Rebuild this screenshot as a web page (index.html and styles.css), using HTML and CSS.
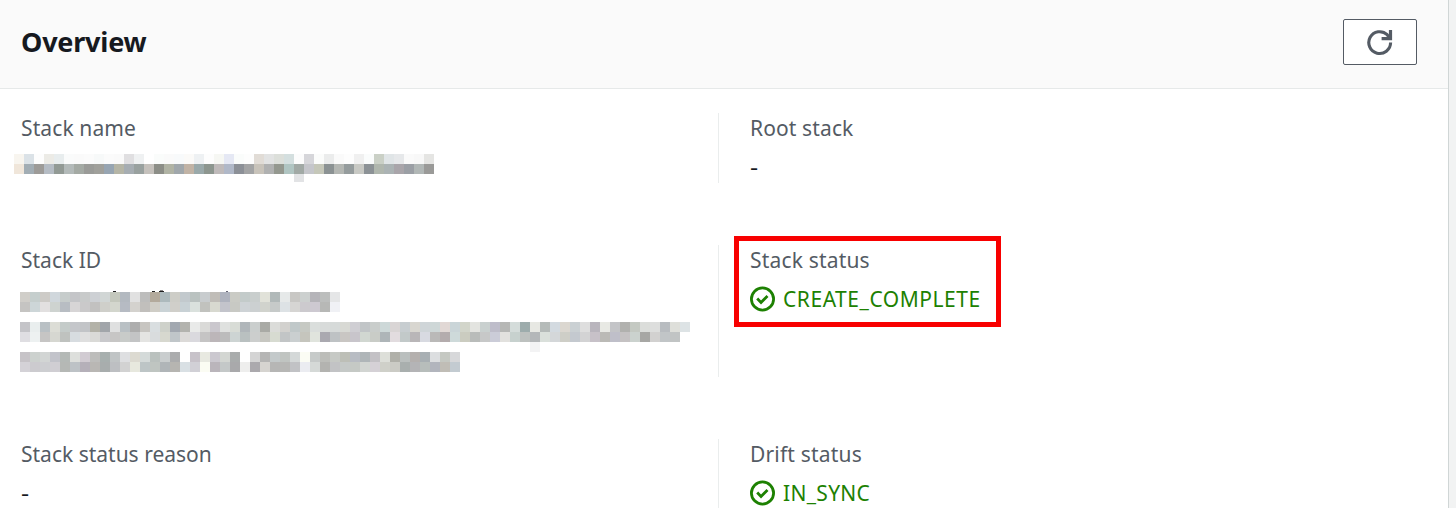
FILE: index.html
```html
<!DOCTYPE html>
<html lang="en">
<head>
<meta charset="utf-8">
<title>Overview</title>
<link rel="stylesheet" href="styles.css">
</head>
<body>
<main class="panel">
  <header class="panel-header">
    <h2 class="title">Overview</h2>
    <button class="refresh" aria-label="Refresh">
      <svg width="28" height="28" viewBox="0 0 28 28"><path d="M24.6 14.6a10.9 10.9 0 1 1-3.4-7.9l2 2.6" fill="none" stroke="#545b64" stroke-width="3.1"/><path d="M24.5 2v8.6H15.6" fill="none" stroke="#545b64" stroke-width="3.2"/></svg>
    </button>
  </header>
  <div class="grid">
    <section class="field name-field">
      <div class="label wide">Stack name</div>
      <svg class="mosaic mosaic-name" data-mosaic="name" width="430" height="30"></svg>
    </section>
    <section class="field side name-field">
      <div class="label wide">Root stack</div>
      <div class="value"><span class="dash">-</span></div>
    </section>
    <section class="field id-field">
      <div class="label">Stack ID</div>
      <svg class="mosaic mosaic-id" data-mosaic="id" width="680" height="84"></svg>
    </section>
    <section class="field side id-field">
      <div class="label wider">Stack status</div>
      <div class="value ok"><svg class="check" width="26" height="26" viewBox="0 0 26 26"><circle cx="12.5" cy="13" r="11.1"/><path d="M7.2 12.6l3.8 3.8 6.5-6.5"/></svg><span class="create">CREATE_COMPLETE</span></div>
      <div class="highlight"></div>
    </section>
    <section class="field reason-field">
      <div class="label">Stack status reason</div>
      <div class="value"><span class="dash">-</span></div>
    </section>
    <section class="field side reason-field">
      <div class="label wider">Drift status</div>
      <div class="value ok"><svg class="check" width="26" height="26" viewBox="0 0 26 26"><circle cx="12.5" cy="13" r="11.1"/><path d="M7.2 12.6l3.8 3.8 6.5-6.5"/></svg><span class="sync">IN_SYNC</span></div>
    </section>
  </div>
</main>
<script src="mosaic.js"></script>
</body>
</html>
```
FILE: styles.css
```css
* { box-sizing: border-box; }
body {
  margin: 0;
  height: 508px;
  overflow: hidden;
  background: #f2f3f3;
  font-family: "Noto Sans", "Open Sans", sans-serif;
  font-size: 21px;
  color: #16191f;
}
.panel {
  width: 1449px;
  height: 508px;
  overflow: hidden;
  background: #fff;
  border-right: 1px solid #d0d6d6;
}
.panel-header {
  display: flex;
  align-items: center;
  justify-content: space-between;
  height: 89px;
  padding: 0 31px 4px 21px;
  background: #fafafa;
  border-bottom: 1px solid #e6e9e9;
}
.title {
  margin: 0;
  font-size: 27px;
  line-height: 36px;
  font-weight: 700;
  letter-spacing: -0.22px;
}
.refresh {
  display: flex;
  align-items: center;
  justify-content: center;
  width: 74px;
  height: 46px;
  padding: 0;
  background: #fff;
  border: 1px solid #545b64;
  border-radius: 2px;
}
.grid {
  display: grid;
  grid-template-columns: 718px 730px;
  row-gap: 62px;
  padding-top: 24px;
}
.field { padding-left: 21px; }
.side {
  position: relative;
  padding-left: 31px;
  border-left: 1px solid #eaeded;
}
.name-field { height: 70px; }
.id-field { height: 132px; }
.reason-field { height: 90px; }
.label {
  height: 33px;
  line-height: 31px;
  color: #545b64;
  white-space: nowrap;
}
.wide { letter-spacing: 0.12px; }
.wider { letter-spacing: 0.18px; }
.value {
  display: flex;
  align-items: center;
  height: 42px;
  line-height: 42px;
}
.dash { transform: scaleX(1.2); transform-origin: left; }
.ok { gap: 7px; color: #1d8102; }
.create { letter-spacing: 0.54px; }
.sync { letter-spacing: 0.3px; }
.check { fill: none; stroke: #1d8102; stroke-width: 2.8; }
.mosaic { display: block; }
.mosaic-name { margin: 8px 0 0 -7px; }
.mosaic-id { margin: 12px 0 0 -1px; }
.highlight {
  position: absolute;
  left: 15px;
  top: -9px;
  width: 267px;
  height: 91px;
  border: 5px solid #f80000;
}
```
FILE: mosaic.js
```js
const mosaics = {
  name: [
    [0, "f8f5ef dbe2e7 fdfdfd ecebe6 e8edee fafbfb fafafa fbfbfb f7f9f9 fbfbfb fafafa e0dfe1 eff1f2 ffffff fafcfb fafafa f8fafb fbfaf8 eef1f3 fdfdfd f6f7f3 e5e8f4 fafcfb fdfdfd e1dcd6 e2e3e3 dcdfda d4dfdf fcfcfc d6d6da fbfcfb ebecec fafafa fdfdfd f0f0f0 fafcfc cad0c6 e0e5e7 e6e8ea fafafa f8f8f8 e5e5e3"],
    [10, "f0e6da a2adb4 9d9b98 b5bcc4 929a95 b3bab9 a4aaa4 9a9b98 a0a09b 97a5b2 b5b5a6 a6adb2 99a19f c5c1bc 8c8e87 b0b3a4 a0a7ab c1b3a5 9aa9aa 8d968f bfbaba b0b8c8 8c9097 a3a4a5 c8c3ba b0b1b1 94988f b0c5c2 a1a9a5 c5c6cb c5c7b9 8b9293 b4b7b3 959c9d c8c9c4 8c9296 b0b7ae abb3b4 a9a5aa 9b9fa5 b1b7b6 9a9a98"]
  ],
  id: [
    [2, "d0cec9 c5cecd cdcbc7 d0d7dc c6cccb c4c5c8 c8caca cdd0d4 d1d6d5 c4c8bd b3b9c0 e1e1e1 bdbdbc b3aa9c adbabd cdcdc7 c2c9cd bac2c0 c8ccce c0bdb8 afb3be cacbc5 c3cbca c9cecd e1e2d9 b1b9b9 e6e9e9 c8c7c4 ccd0cf b5b4b9 bcbebd e5e6e7"],
    [12, "c5c4c2 cdd6d8 e2e0e0 ced3d0 b8bdc3 d7d5d6 cac9ca c2c1c0 cfcfca d3d6cd b6bbc3 d4d2ce c1bfbc cfcdc6 cad3d6 d0cfca c8d1d5 dae1dd c1c2be d8d9d0 c3c4cb c8c9c4 ced3d6 ccd0d1 d1d3cd c6cac9 dde2e5 d6d5d3 cccace cdc9d1 b7b8b6 f0f1f5"],
    [32, "c4c4c8 e9eeee b9c0c4 dcddd6 c4cbc9 c4c6ca c2c4c7 b3b2a8 a1a5aa dfe0e0 b9c0c4 adadad c7c5c1 d9dee0 ced1ca a2a8b0 b3b3ae e9eae9 dadad8 cac7cd dfe1df d8dcd6 b0b6ba cacecd a9aaa5 dbdcd9 d2d1ce c0c8c9 c6c9c3 dadedc d8dbda d6dad9 d8d9d4 cfced3 c1c5c7 c9cdcb cdd8d8 d9d5d5 c7cdd0 d8d6d0 cfd5d8 ced7d7 e1d8d5 cad5d8 d2d5ca e3e4e0 c9d0cf bebdca b6b7b5 d4dcda 9dacac e7e8e3 b5bbb9 d3dae0 dbd7d0 cad0d3 dedede b9b5bd e8e9e4 c3c4c7 b1b1ae c4c9c2 dbddda dddedd b8bcc0 dedfda dde3e5"],
    [42, "dfdee2 edf1f1 c6c5c4 d6d7d1 bfc2bf d7dce0 dfdfdf dadad7 c9c9cc c7c6c5 c8cbc9 c3c4c5 e4e4e2 d9dcdd d7d8cf c0c6c9 dcdad8 dad9de c5c4c4 bcb6b9 bcbcbc cdd4d3 b9c0c0 cccecd c7c7c1 d7dbd1 c2c5c6 cacfd0 c5c5bd e0e4dd aaa9b0 bec2c4 c9c6c3 c8c5cb d1d7d1 c9ccc7 aeb5b8 e2dcdf c2c9c9 b9b6b8 d8dae1 bab9b8 b4acad cedada cbccc0 b9bcba c7c8c8 cbccd8 e2e1de c7d1ce bdc1bf b4b7b9 dae0db d4d7d9 cecec7 c4c9cf d3d3d4 c7c1c8 bbbab6 bfbfc9 c5c2c3 cbd2ce a7a7a4 d2d1d0 c1c5c7 c1c4c4"],
    [62, "c6c3c7 ccd1ce d2d5d4 c2c3ca b4b9b6 dddfdc d1cbd2 bdbdbb a7afae c0c4c5 dedfe1 dcdad1 d4dad9 bac1be c9cdce abacad ffffff c7c2c9 e8e9e1 cbc8cf d3d6d2 a9acac ffffff d4d4d4 b5b5b4 c3c9ca c0c4c1 d4d8d8 fbfcf4 c6cac9 bcbdb9 c6c9c5 bdbfb7 b8bcc3 afb5b8 c3c1c5 dddfd9 b0b0a9 babfbe b4b0ae a8afb3 dcdee0 c5c8c2 d7d8da"],
    [72, "d4d2d7 cccbcf cdced1 d0ced3 b5b8b5 bdc2c6 b5b0b9 b9b7b4 a8adad bdbfc2 d2d2d2 e7e8de bdc5c6 bfc5c1 b0b5b8 b6b5b1 d9e0e4 d1d0d6 fbfcf3 bab5bb c4c8c8 a9a9ab eeeeed aba9ad d6d4d0 b6b6b5 b7b7b5 c1c2c5 ebecf1 d5d9d7 b3b3b0 c2c3c5 c5c9c7 c5c9c5 d2d5d2 d5d1d6 cfd0c9 cbcbc5 a9afae b4b4b6 b7bdbb b2b5bd c0bdb6 c3cbd1"]
  ]
};
const extras = {
  name: [[280, 20, 10, 8, "#e2e3e5"]],
  id: [
    [510, 52, 10, 10, "#f3f3f4"],
    [93, 1, 3, 1, "#222"],
    [132, 1, 3, 1, "#222"], [139, 1, 5, 1, "#222"], [140, 0, 3, 1, "#888"],
    [206, 1, 2, 1, "#667"]
  ]
};
document.querySelectorAll("[data-mosaic]").forEach(svg => {
  const key = svg.dataset.mosaic;
  const add = (x, y, w, h, fill) => {
    const rect = document.createElementNS("http://www.w3.org/2000/svg", "rect");
    Object.entries({ x, y, width: w, height: h, fill }).forEach(([k, v]) => rect.setAttribute(k, v));
    svg.append(rect);
  };
  mosaics[key].forEach(([y, colors]) => colors.split(" ").forEach((c, i) => add(i * 10, y, 10, 10, "#" + c)));
  extras[key].forEach(e => add(...e));
});
```
